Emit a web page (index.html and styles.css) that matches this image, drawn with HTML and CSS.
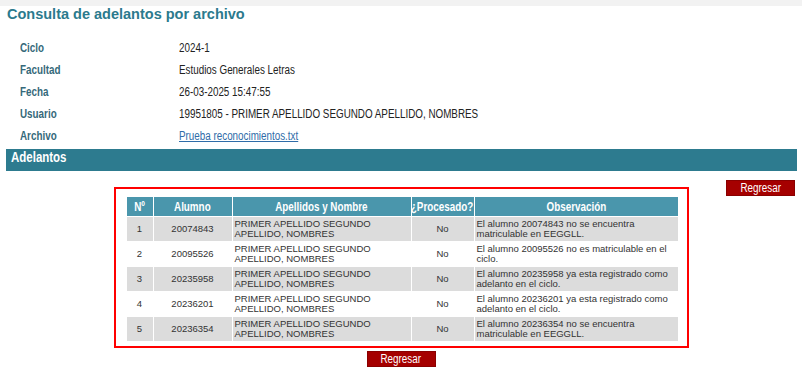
FILE: index.html
```html
<!DOCTYPE html>
<html lang="es">
<head>
<meta charset="UTF-8" />
<title>Consulta de adelantos por archivo</title>
<link rel="stylesheet" href="styles.css">
</head>
<body>
  <div class="topstrip"></div>
  <h1 class="titulo">Consulta de adelantos por archivo</h1>

  <table class="datos">
    <tr><td class="etq"><span class="n">Ciclo</span></td><td><span class="n">2024-1</span></td></tr>
    <tr><td class="etq"><span class="n">Facultad</span></td><td><span class="n">Estudios Generales Letras</span></td></tr>
    <tr><td class="etq"><span class="n">Fecha</span></td><td><span class="n">26-03-2025 15:47:55</span></td></tr>
    <tr><td class="etq"><span class="n">Usuario</span></td><td><span class="n">19951805 - PRIMER APELLIDO SEGUNDO APELLIDO, NOMBRES</span></td></tr>
    <tr><td class="etq"><span class="n">Archivo</span></td><td><a class="n" href="#">Prueba reconocimientos.txt</a></td></tr>
  </table>

  <div class="barra"><span class="n">Adelantos</span></div>

  <div class="contenido">
    <button class="btn btn-top" type="button"><span class="n">Regresar</span></button>
    <div class="recuadro">
      <table class="lista">
        <thead>
          <tr>
            <th class="c-num"><span class="n">Nº</span></th>
            <th class="c-alu"><span class="n">Alumno</span></th>
            <th class="c-nom"><span class="n">Apellidos y Nombre</span></th>
            <th class="c-pro"><span class="n">¿Procesado?</span></th>
            <th class="c-obs"><span class="n">Observación</span></th>
          </tr>
        </thead>
        <tbody>
          <tr class="par">
            <td class="centro">1</td><td class="centro">20074843</td>
            <td>PRIMER APELLIDO SEGUNDO APELLIDO, NOMBRES</td>
            <td class="centro">No</td>
            <td>El alumno 20074843 no se encuentra matriculable en EEGGLL.</td>
          </tr>
          <tr>
            <td class="centro">2</td><td class="centro">20095526</td>
            <td>PRIMER APELLIDO SEGUNDO APELLIDO, NOMBRES</td>
            <td class="centro">No</td>
            <td>El alumno 20095526 no es matriculable en el ciclo.</td>
          </tr>
          <tr class="par">
            <td class="centro">3</td><td class="centro">20235958</td>
            <td>PRIMER APELLIDO SEGUNDO APELLIDO, NOMBRES</td>
            <td class="centro">No</td>
            <td>El alumno 20235958 ya esta registrado como adelanto en el ciclo.</td>
          </tr>
          <tr>
            <td class="centro">4</td><td class="centro">20236201</td>
            <td>PRIMER APELLIDO SEGUNDO APELLIDO, NOMBRES</td>
            <td class="centro">No</td>
            <td>El alumno 20236201 ya esta registrado como adelanto en el ciclo.</td>
          </tr>
          <tr class="par">
            <td class="centro">5</td><td class="centro">20236354</td>
            <td>PRIMER APELLIDO SEGUNDO APELLIDO, NOMBRES</td>
            <td class="centro">No</td>
            <td>El alumno 20236354 no se encuentra matriculable en EEGGLL.</td>
          </tr>
        </tbody>
      </table>
    </div>
    <div class="pie">
      <button class="btn" type="button"><span class="n">Regresar</span></button>
    </div>
  </div>
</body>
</html>
```
FILE: styles.css
```css
body {
  margin: 0; background: #fff; color: #222;
  font-family: 'Liberation Sans', Arial, sans-serif;
}
/* texto angosto (el original usa Arial Narrow) */
.n {
  display: inline-block; white-space: nowrap;
  transform: scaleX(0.82); transform-origin: 0 50%;
}
.topstrip {
  height: 6px; background: #f2f2f2;
}
.titulo {
  margin: 0; padding: 0 7px;
  font-size: 14.5px; font-weight: 700; color: #2b7a8d;
  line-height: 16px;
}
.datos {
  border-collapse: collapse; margin: 15px 0 0 20px;
  font-size: 12px;
}
.datos td {
  padding: 0; height: 22px; vertical-align: middle;
}
.datos .etq {
  width: 159px; color: #35697a; font-weight: 700;
}
.datos a {
  color: #2f6ca8; text-decoration: underline;
}
.barra {
  margin: 2px 5px 0 6px; height: 22px;
  background: #2d7b8f; color: #fff;
  font-size: 14px; font-weight: 700; line-height: 16px;
  padding: 0 5px; box-sizing: border-box;
}
.contenido {
  padding-top: 9px;
}
.btn {
  background: #a50000; color: #fff;
  border: 1px solid #8a0000;
  font-family: inherit; font-size: 12px; line-height: 14px;
  width: 69px; height: 16px; padding: 0; cursor: pointer;
}
.btn .n {
  transform-origin: 50% 50%;
}
.btn-top {
  float: right; margin-right: 7px;
}
.recuadro {
  width: 552px; margin: 7px auto 0;
  border: 2px solid #f00;
  padding: 8px 8px 5px 11px;
}
.lista {
  width: 553px; margin: -1px; table-layout: fixed;
  border-collapse: separate; border-spacing: 1px;
  font-size: 9.5px; color: #333;
}
.lista th {
  background: #4a96ac; color: #fff;
  font-size: 12px; font-weight: 700; height: 19px; padding: 0;
}
.lista th .n {
  transform-origin: 50% 50%; margin: 0 -8px;
}
.lista td {
  height: 24px; padding: 0 2px; line-height: 10.5px;
  background: #fff; vertical-align: middle;
}
.lista tr.par td {
  background: #dcdcdc;
}
.lista .centro {
  text-align: center;
}
.c-num { width: 26px; }
.c-alu { width: 78px; }
.c-nom { width: 178px; }
.c-pro { width: 62px; }
.pie {
  display: flex; justify-content: center; padding-top: 3px;
}
```
